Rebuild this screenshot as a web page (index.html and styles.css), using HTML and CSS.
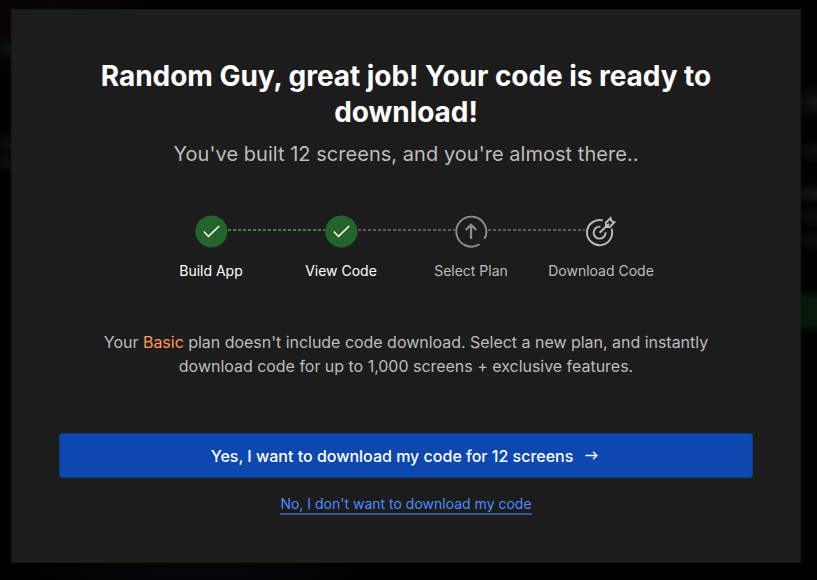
FILE: index.html
```html
<!DOCTYPE html>
<html lang="en">
<head>
<meta charset="utf-8">
<title>Download code</title>
<link rel="stylesheet" href="styles.css">
</head>
<body>
<main class="modal">
  <h1 class="title">Random Guy, great job! Your code is ready to download!</h1>
  <p class="subtitle">You've built 12 screens, and you're almost there..</p>
  <div class="track">
    <svg class="done" width="33" height="33" viewBox="0 0 33 33"><circle cx="16.4" cy="16.4" r="16"/><path d="M8.8 16.6l4.7 4.8L24.2 11"/></svg>
    <span class="line line-done"></span>
    <svg class="done" width="33" height="33" viewBox="0 0 33 33"><circle cx="16.4" cy="16.4" r="16"/><path d="M8.8 16.6l4.7 4.8L24.2 11"/></svg>
    <span class="line"></span>
    <svg class="icon icon-plan" width="33" height="33" viewBox="-.5 0 33 33"><path d="M24 29.2A15 15 0 1 1 29 23.8"/><path class="arrow" d="M15.5 24V10.5M10.2 15L15.5 9.8l5.3 5.2"/></svg>
    <span class="line"></span>
    <svg class="icon icon-target" width="33" height="33" viewBox="0 0 33 33"><path d="M17.8 5.4A12.6 12.6 0 1 0 26.5 13.5"/><path d="M15.4 11.7A6 6 0 1 0 20.6 17.3"/><path d="M14.6 17.7L24 8.8M21 12L20.8 7.7 25.6 3.1 26.5 6.2 29.4 7.2 24.8 12Z"/></svg>
  </div>
  <div class="labels">
    <span class="label label-done">Build App</span>
    <span class="label label-done">View Code</span>
    <span class="label">Select Plan</span>
    <span class="label">Download Code</span>
  </div>
  <p class="message">Your <span class="plan">Basic</span> plan doesn't include code download. Select a new plan, and instantly download code for up to 1,000 screens + exclusive features.</p>
  <button class="primary">Yes, I want to download my code for 12 screens
    <svg width="13" height="12" viewBox="0 0 13 12"><path d="M.5 5.5h11.3M8 1.7l3.9 3.8L8 9.3"/></svg>
  </button>
  <a class="decline">No, I don't want to download my code</a>
</main>
</body>
</html>
```
FILE: styles.css
```css
* { box-sizing: border-box; }
body {
  margin: 0;
  height: 580px;
  padding: 9px 16px 0 11px;
  overflow: hidden;
  font-family: Inter, "Liberation Sans", sans-serif;
  background:
    linear-gradient(transparent, #08190b 25%, #08190b 75%, transparent) 800px 288px / 17px 46px no-repeat,
    radial-gradient(closest-side, #151515, transparent) 782px 85px / 70px 34px no-repeat,
    radial-gradient(closest-side, #101010, transparent) 782px 138px / 70px 26px no-repeat,
    radial-gradient(closest-side, #171717, transparent) 782px 182px / 70px 24px no-repeat,
    radial-gradient(closest-side, #0e0e0e, transparent) 782px 205px / 70px 24px no-repeat,
    radial-gradient(closest-side, #0e0e0e, transparent) 782px 229px / 70px 24px no-repeat,
    radial-gradient(closest-side, #101010, transparent) -20px 35px / 60px 28px no-repeat,
    radial-gradient(closest-side, #0e0e0e, transparent) -20px 132px / 60px 26px no-repeat,
    radial-gradient(closest-side, #0e0e0e, transparent) -20px 151px / 60px 24px no-repeat,
    radial-gradient(closest-side, #0c0703, transparent) -60px -30px / 220px 110px no-repeat,
    radial-gradient(closest-side, #05080a, transparent) 40px 545px / 320px 50px no-repeat,
    #010101;
}
.modal {
  display: flex;
  flex-direction: column;
  align-items: center;
  height: 554px;
  padding: 48px 47px 0;
  border: 1px solid #181818;
  background: #1c1c1c;
  color: #bdbdbd;
  text-align: center;
}
.title {
  width: 650px;
  margin: 0;
  font-size: 28px;
  line-height: 36px;
  font-weight: 700;
  letter-spacing: -.045px;
  color: #fff;
}
.subtitle {
  margin: 10px 0 0;
  font-size: 20px;
  line-height: 28px;
  letter-spacing: .035px;
}
.track {
  display: flex;
  align-items: flex-start;
  width: 422px;
  margin-top: 47px;
}
.track svg { display: block; flex: none; }
.done circle { fill: #24642b; }
.done path { fill: none; stroke: #fff; stroke-width: 1.5; }
.icon { fill: none; stroke: #bcbcbc; stroke-width: 1.9; }
.icon-plan { stroke: #8e8e8e; }
.icon-plan .arrow { stroke-width: 2.3; }
.line {
  flex: none;
  width: 97px;
  height: 2px;
  margin-top: 14px;
  background: repeating-linear-gradient(90deg, #5b5b5b 0 3px, transparent 3px 5px);
}
.line-done { background: repeating-linear-gradient(90deg, #3c8145 0 3px, transparent 3px 5px); }
.labels {
  display: grid;
  grid-template-columns: repeat(4, 130px);
  margin-top: 13px;
}
.label { font-size: 14px; line-height: 20px; }
.label-done { color: #fff; }
.message {
  width: 630px;
  margin: 49px 0 0;
  font-size: 16px;
  line-height: 24px;
  letter-spacing: -.025px;
}
.plan { color: #ff9955; }
.primary {
  display: flex;
  align-items: center;
  justify-content: center;
  gap: 12px;
  width: 694px;
  height: 45px;
  margin-top: 55px;
  padding: 1px 3px 0 0;
  border: 1px solid #173b80;
  border-radius: 3px;
  background: #0d47b0;
  color: #fff;
  font: 500 16px/24px Inter, "Liberation Sans", sans-serif;
}
.primary path { fill: none; stroke: #fff; stroke-width: 1.3; }
.decline {
  margin-top: 16px;
  border-bottom: 2px solid #355794;
  font-size: 14px;
  line-height: 19px;
  color: #4a8cff;
}
```
